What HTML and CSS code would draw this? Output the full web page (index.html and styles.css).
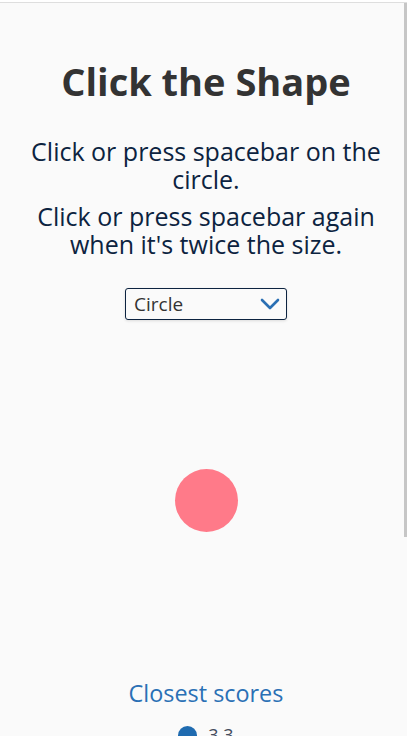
FILE: index.html
```html
<!DOCTYPE html>
<html lang="en">
<head>
<meta charset="utf-8">
<title>Click the Shape</title>
<link rel="stylesheet" href="styles.css">
</head>
<body>
<div class="frame">
  <main class="app">
    <h1 class="title">Click the Shape</h1>
    <p class="instr">Click or press spacebar on the circle.</p>
    <p class="instr second">Click or press spacebar again when it's twice the size.</p>
    <div class="select-wrap">
      <div class="select">
        <span class="select-label">Circle</span>
        <svg class="chev" width="20" height="12" viewBox="0 0 20 12"><path d="M2 2 L10 10 L18 2" fill="none" stroke="#2a6fb3" stroke-width="2.6" stroke-linecap="round" stroke-linejoin="round"/></svg>
      </div>
    </div>
    <div class="stage">
      <div class="shape"></div>
    </div>
    <h2 class="scores-title">Closest scores</h2>
    <div class="score-row">
      <span class="dot"></span><span class="score">3.3</span>
    </div>
  </main>
  <div class="scrollthumb"></div>
</div>
</body>
</html>
```
FILE: styles.css
```css
html, body {
  margin: 0;
  padding: 0;
  background: #ffffff;
  overflow: hidden;
}
.frame {
  position: relative;
  margin-top: 2px;
  border-top: 1px solid #dedede;
  background: #fafafa;
  height: 733px;
  overflow: hidden;
  font-family: "Open Sans", "Noto Sans", sans-serif;
}
.app {
  display: flex;
  flex-direction: column;
  align-items: center;
  text-align: center;
  padding: 0 17px 0 22px;
}
.title {
  margin: 56px 0 0;
  font-size: 38px;
  line-height: 44px;
  font-weight: 700;
  color: #333333;
}
.instr {
  margin: 34px 0 0;
  font-size: 25px;
  line-height: 28px;
  color: #0c2340;
}
.instr.second {
  margin-top: 9px;
}
.select-wrap {
  margin-top: 30px;
}
.select {
  box-sizing: border-box;
  width: 162px;
  height: 32px;
  border: 1px solid #0c2340;
  border-radius: 3px;
  background: #fafafa;
  box-shadow: 0 1px 3px rgba(0,0,0,0.12);
  display: flex;
  align-items: center;
  justify-content: space-between;
  padding: 0 6px 0 8px;
}
.select-label {
  font-size: 19px;
  color: #333333;
}
.chev {
  display: block;
}
.stage {
  height: 355px;
  padding-top: 3px;
  width: 100%;
  display: flex;
  align-items: center;
  justify-content: center;
}
.shape {
  width: 63px;
  height: 63px;
  border-radius: 50%;
  background: #ff7a89;
}
.scores-title {
  margin: 0;
  font-size: 23.4px;
  line-height: 30px;
  font-weight: 400;
  color: #2a70b5;
}
.score-row {
  margin-top: 15px;
  display: flex;
  align-items: center;
  gap: 11px;
}
.dot {
  width: 19px;
  height: 19px;
  border-radius: 50%;
  background: #1f6bb0;
}
.score {
  font-size: 18px;
  color: #444c5c;
}
.scrollthumb {
  position: absolute;
  right: 0;
  top: 0;
  width: 3px;
  height: 534px;
  background: #c6c6c6;
}
```
